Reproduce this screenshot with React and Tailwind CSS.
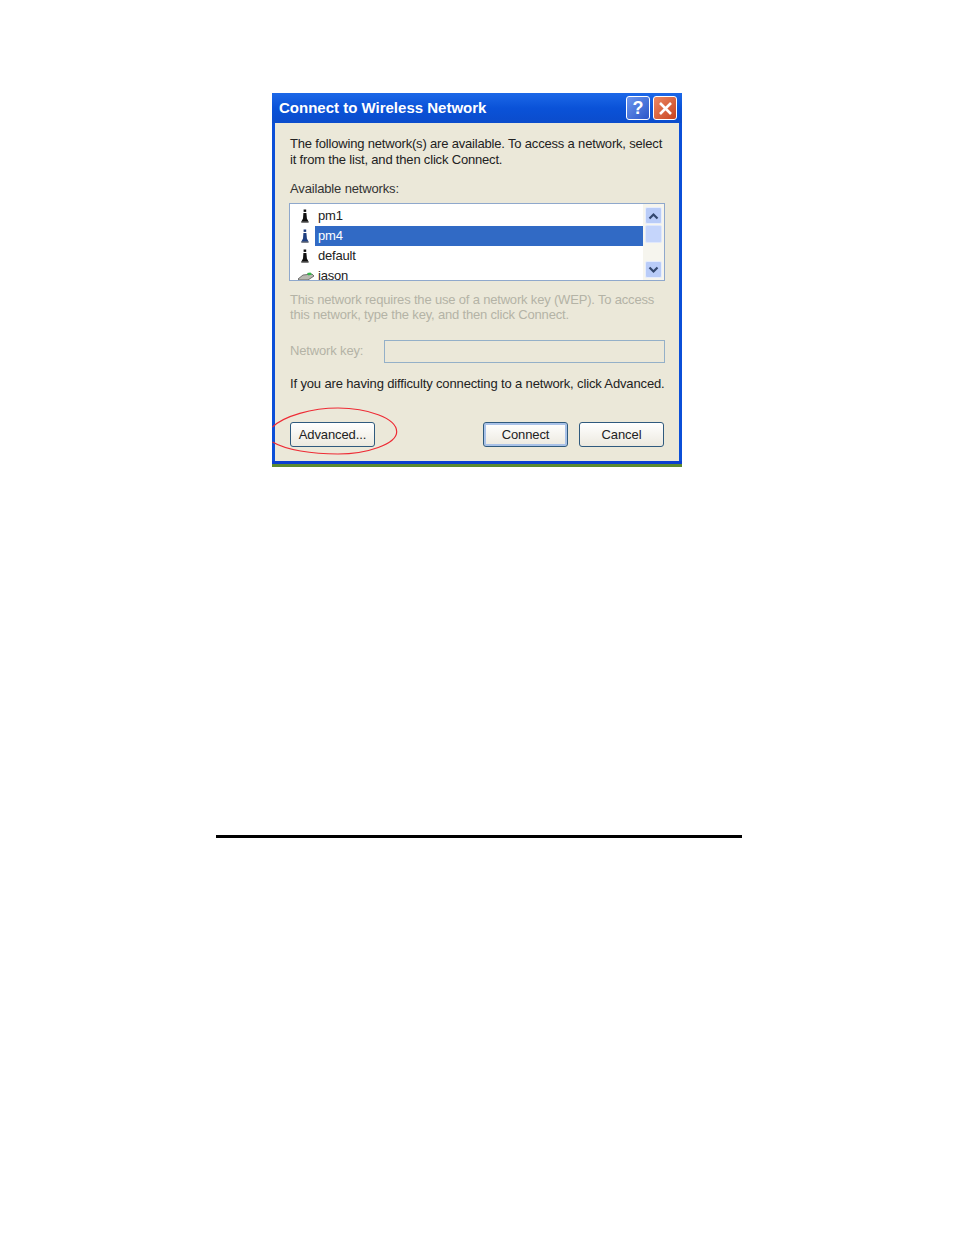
const font = { fontFamily: '"Liberation Sans", Arial, sans-serif' };

function Station({ color = "#111" }) {
  return (
    <svg width="10" height="14" viewBox="0 0 10 14" className="shrink-0">
      <rect x="3.6" y="0.5" width="2.6" height="2.4" fill={color} />
      <path d="M3.4 4h3l.5 5.5 1.6 3v1H1.4v-1l1.6-3z" fill={color} />
      <rect x="1.4" y="12.5" width="7" height="1.2" fill="#777" />
    </svg>
  );
}

function Router() {
  return (
    <svg width="18" height="10" viewBox="0 0 18 10" className="shrink-0">
      <path d="M1 8l5-4 9-1 2 2-6 4H2z" fill="#b8b8b0" stroke="#555" strokeWidth="0.8" />
      <path d="M10 2l3.5-.5L15 3.5l-3.5 1z" fill="#35b84a" />
    </svg>
  );
}

function ScrollArrow({ down }) {
  return (
    <div className="w-[17px] h-[17px] rounded-[2px] bg-[#b9ccf8] border border-[#e6edfd] flex items-center justify-center">
      <svg width="11" height="8" viewBox="0 0 11 8">
        <path
          d={down ? "M1.5 1.5l4 4 4-4" : "M1.5 6.5l4-4 4 4"}
          fill="none"
          stroke="#34486f"
          strokeWidth="2.2"
        />
      </svg>
    </div>
  );
}

function XpButton({ label, primary }) {
  return (
    <button
      className={`w-[85px] h-[25px] rounded-[3px] border border-[#2f5a7e] bg-gradient-to-b from-white to-[#ece9df] text-[13px] tracking-[-0.1px] text-[#222] ${
        primary ? "shadow-[inset_0_0_0_2px_#a9c2e8]" : ""
      }`}
    >
      {label}
    </button>
  );
}

export default function App() {
  return (
    <div className="w-[954px] h-[1235px] bg-white pt-[93px] flex flex-col items-center" style={font}>
      <div className="w-[410px] h-[374px] relative flex flex-col bg-[#0b4fd8] shrink-0">
        {/* title bar */}
        <div className="h-[30px] bg-gradient-to-b from-[#1c68e8] via-[#0a52d8] to-[#0b4ccc] flex items-center pl-[7px] pr-[5px]">
          <span className="text-white font-bold text-[15px] whitespace-nowrap">Connect to Wireless Network</span>
          <div className="ml-auto flex gap-[3px]">
            <div className="w-[24px] h-[24px] rounded-[3px] border border-white bg-gradient-to-br from-[#6f97ee] to-[#2a55c8] flex items-center justify-center text-white font-bold text-[18px]">
              ?
            </div>
            <div className="w-[24px] h-[24px] rounded-[3px] border border-white bg-gradient-to-br from-[#ea8763] to-[#c9421c] flex items-center justify-center">
              <svg width="15" height="15" viewBox="0 0 15 15">
                <path d="M2 2l11 11M13 2L2 13" stroke="white" strokeWidth="2.6" />
              </svg>
            </div>
          </div>
        </div>

        {/* dialog body */}
        <div className="flex-1 mx-[3px] bg-[#ebe8d9] px-[15px] pt-[13px] text-[13px] text-[#222] flex flex-col whitespace-nowrap">
          <p className="leading-[16px] tracking-[-0.18px]">
            The following network(s) are available. To access a network, select
            <br />
            it from the list, and then click Connect.
          </p>
          <p className="mt-[13px] leading-[15px] text-[#333] tracking-[-0.15px]">Available networks:</p>

          <div className="mt-[7px] h-[78px] w-[376px] -ml-[1px] border border-[#8fa8cc] bg-white flex overflow-hidden">
            <div className="flex-1 pt-[2px] tracking-[-0.2px]">
              <div className="h-[20px] flex items-center">
                <div className="w-[25px] flex justify-center pl-[5px]"><Station /></div>
                <span className="pl-[3px]">pm1</span>
              </div>
              <div className="h-[20px] flex items-center">
                <div className="w-[25px] flex justify-center pl-[5px]"><Station color="#1f3f80" /></div>
                <span className="flex-1 h-[20px] bg-[#316ac5] text-white pl-[3px] leading-[20px]">pm4</span>
              </div>
              <div className="h-[20px] flex items-center">
                <div className="w-[25px] flex justify-center pl-[5px]"><Station /></div>
                <span className="pl-[3px]">default</span>
              </div>
              <div className="h-[20px] flex items-center">
                <div className="w-[25px] flex justify-end"><Router /></div>
                <span className="pl-[3px]">jason</span>
              </div>
            </div>
            <div className="w-[21px] pl-[2px] pt-[3px] pb-[2px] flex flex-col bg-[#f6f5ee]">
              <ScrollArrow />
              <div className="mt-[1px] h-[18px] w-[17px] rounded-[2px] bg-[#c5d5fb] border border-[#e0e8fc]" />
              <div className="flex-1" />
              <ScrollArrow down />
            </div>
          </div>

          <p className="mt-[11px] leading-[15px] text-[#b4b3a6] tracking-[-0.18px]">
            This network requires the use of a network key (WEP). To access
            <br />
            this network, type the key, and then click Connect.
          </p>

          <div className="mt-[18px] flex items-center">
            <span className="pb-[2px] text-[#b4b3a6] tracking-[-0.15px]">Network key:</span>
            <div className="ml-auto -mr-[1px] w-[281px] h-[23px] border border-[#94b0c8] bg-[#ebe8d9]" />
          </div>

          <p className="mt-[13px] leading-[15px] tracking-[-0.14px]">
            If you are having difficulty connecting to a network, click Advanced.
          </p>

          <div className="mt-[31px] flex">
            <XpButton label="Advanced..." />
            <div className="ml-auto flex gap-[11px]">
              <XpButton label="Connect" primary />
              <XpButton label="Cancel" />
            </div>
          </div>
        </div>
        <div className="h-[3px] bg-[#0b3fd0]" />
        <div className="h-[3px] bg-[#5c8a30]" />

        {/* red marker round the Advanced button */}
        <svg width="130" height="52" viewBox="0 0 130 52" className="absolute left-0 top-[313px]">
          <path
            d="M0.5 21C12 10 40 2 66 2c29 0 58.7 10 58.7 23.7C124.7 38 95 48 66 48c-26 0-52-4-65.5-12"
            fill="none"
            stroke="#ee2b35"
            strokeWidth="1.2"
          />
        </svg>
      </div>

      <div className="mt-[368px] ml-[4px] w-[526px] h-[3px] bg-black shrink-0" />
    </div>
  );
}
